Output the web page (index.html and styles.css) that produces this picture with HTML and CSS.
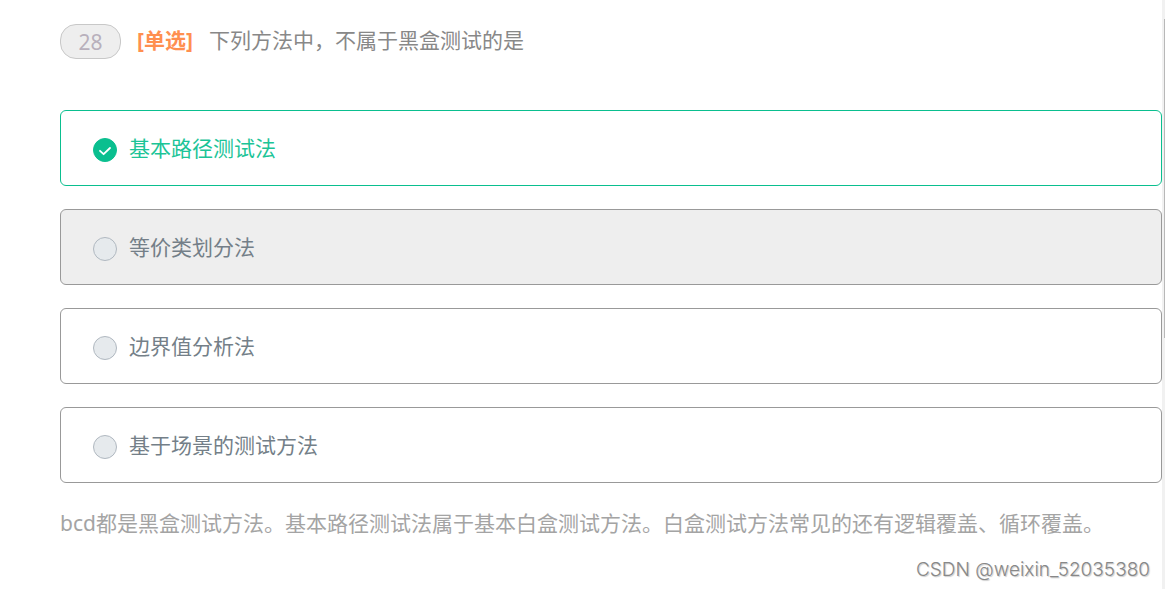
FILE: index.html
```html
<!DOCTYPE html>
<html lang="zh-CN">
<head>
    <meta charset="UTF-8">
    <meta name="viewport" content="width=device-width, initial-scale=1.0">
    <title>单选题</title>
    <link rel="stylesheet" href="styles.css">
</head>
<body>
    <main class="question">
        <!-- 题目 -->
        <div class="question-header">
            <span class="question-number">28</span>
            <span class="question-type">[单选]</span>
            <span class="question-title" id="title">下列方法中，不属于黑盒测试的是</span>
        </div>

        <!-- 选项 -->
        <div class="options" role="radiogroup" aria-labelledby="title">
            <label class="option correct">
                <span class="option-mark">
                    <input type="radio" name="answer" class="option-radio" checked>
                    <svg class="option-check" viewBox="0 0 24 24" aria-hidden="true">
                        <path d="M7 12.8l3.6 3.4 6.4-6.2" fill="none" stroke="#fff" stroke-width="1.8" stroke-linecap="round" stroke-linejoin="round"/>
                    </svg>
                </span>
                <span>基本路径测试法</span>
            </label>
            <label class="option active">
                <span class="option-mark"><input type="radio" name="answer" class="option-radio"></span>
                <span>等价类划分法</span>
            </label>
            <label class="option">
                <span class="option-mark"><input type="radio" name="answer" class="option-radio"></span>
                <span>边界值分析法</span>
            </label>
            <label class="option">
                <span class="option-mark"><input type="radio" name="answer" class="option-radio"></span>
                <span>基于场景的测试方法</span>
            </label>
        </div>

        <!-- 解析 -->
        <p class="analysis">bcd都是黑盒测试方法。基本路径测试法属于基本白盒测试方法。白盒测试方法常见的还有逻辑覆盖、循环覆盖。</p>
    </main>

    <div class="scrollbar"><div class="scrollbar-thumb"></div></div>
    <div class="watermark">CSDN @weixin_52035380</div>
</body>
</html>
```

FILE: styles.css
```css
* { box-sizing: border-box; }
body {
    margin: 0;
    background: #fff;
    font-family: "Noto Sans", "Noto Sans CJK SC", sans-serif;
    font-size: 21px;
    line-height: 30px;
    color: #808080;
}
.question {
    padding: 24px 3px 24px 60px;
}

/* 题目 */
.question-header {
    display: flex;
    align-items: flex-start;
    height: 35px;
    line-height: 32px;
}
.question-number {
    width: 61px;
    height: 35px;
    border: 1px solid #c8c8c8;
    border-radius: 16px;
    background: #eee;
    color: #b8b0bc;
    text-align: center;
    line-height: 34px;
}
.question-type {
    margin: 0 16px;
    font-weight: bold;
    color: #ff8f50;
}
.question-title {
    color: #888;
}

/* 选项 */
.options {
    display: flex;
    flex-direction: column;
    gap: 23px;
    margin-top: 51px;
}
.option {
    display: flex;
    align-items: center;
    gap: 12px;
    height: 76px;
    padding: 0 32px;
    border: 1px solid #999;
    border-radius: 6px;
    color: #747f88;
    cursor: pointer;
}
.option.active { background: #eee; }
.option.correct {
    border-color: #0abf8f;
    color: #1cc497;
}
.option-mark {
    position: relative;
    width: 24px;
    height: 24px;
    margin-top: 4px;
}
.option-radio {
    appearance: none;
    display: block;
    width: 24px;
    height: 24px;
    margin: 0;
    border: 1px solid #b0b8c0;
    border-radius: 50%;
    background: #e6eaed;
}
.option-radio:checked {
    border-color: #0abf8f;
    background: #0abf8f;
}
.option-check {
    position: absolute;
    top: 0;
    left: 0;
    width: 24px;
    height: 24px;
    pointer-events: none;
}

/* 解析 */
.analysis {
    margin: 25px 0 0;
    color: #a4a4a4;
}

/* 滚动条 */
.scrollbar {
    position: absolute;
    top: 0;
    right: 0;
    bottom: 0;
    width: 3px;
    padding: 19px 0 0 2px;
    background: #f1f1f1;
}
.scrollbar-thumb {
    height: 56%;
    background: #b8b8b8;
}

/* 水印 */
.watermark {
    position: absolute;
    right: 15px;
    bottom: 4px;
    font-family: Inter, Arial, sans-serif;
    font-size: 19px;
    font-weight: 300;
    color: #888;
    text-shadow: 1px 1px 1px #ccc;
}
```
